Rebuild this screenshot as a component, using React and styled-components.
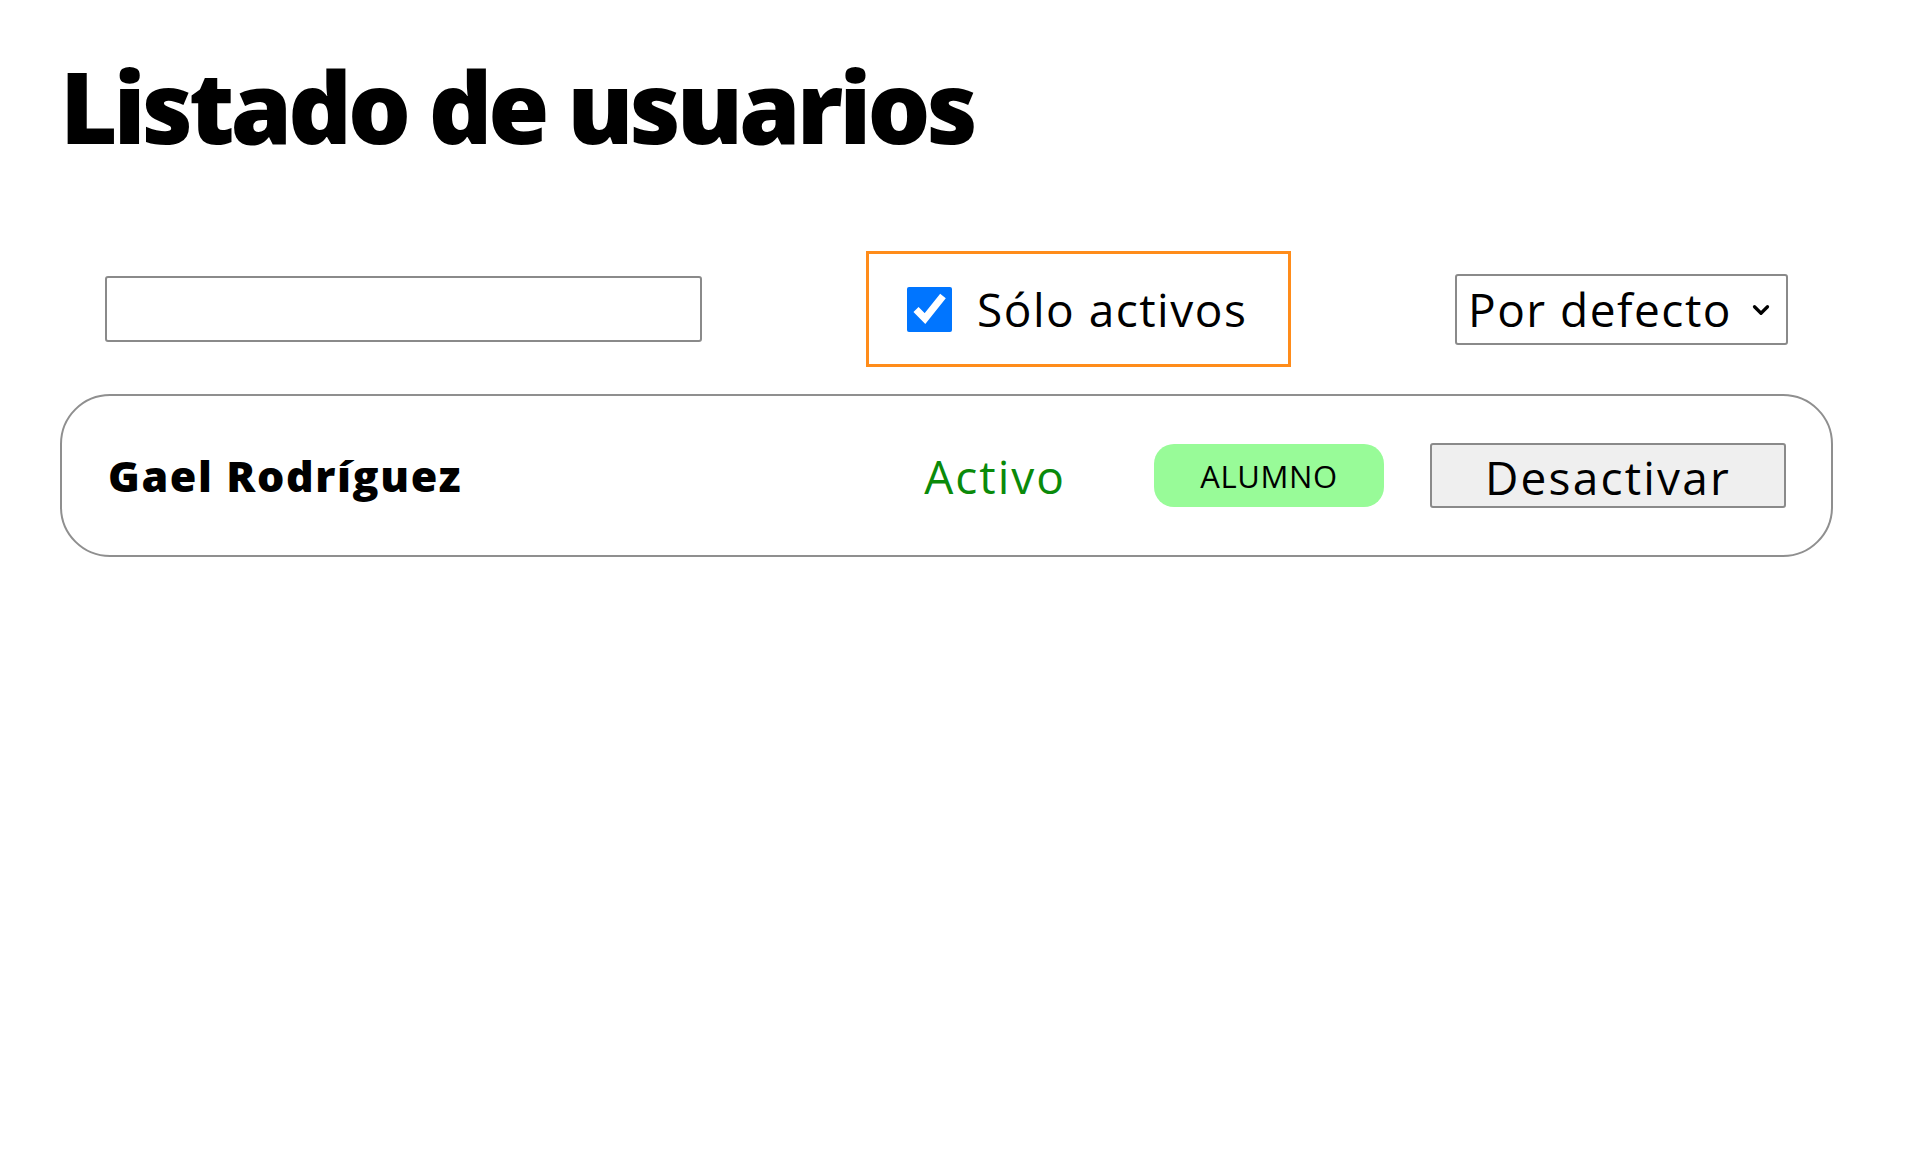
import React from 'react';
import styled, { createGlobalStyle } from 'styled-components';
import { ChevronDown } from 'lucide-react';

const GlobalStyle = createGlobalStyle`
  body {
    margin: 0;
    background: #ffffff;
    font-family: "Open Sans", "DejaVu Sans", sans-serif;
    color: #000000;
  }
`;

const UserListPage = () => {
  // Datos de ejemplo
  const users = [
    { id: 1, name: 'Gael Rodríguez', active: true, role: 'ALUMNO' },
  ];

  return (
    <>
      <GlobalStyle />
      <Wrapper>
        <PageTitle>Listado de usuarios</PageTitle>
        <Filters>
          <SearchInput type="text" />
          <CheckLabel>
            <Checkbox type="checkbox" defaultChecked />
            <span>Sólo activos</span>
          </CheckLabel>
          <SelectWrap>
            <SortSelect defaultValue="default">
              <option value="default">Por defecto</option>
              <option value="name">Nombre</option>
            </SortSelect>
            <SelectArrow size={26} strokeWidth={3} />
          </SelectWrap>
        </Filters>
        <UserList>
          {users.map(user => (
            <UserCard key={user.id}>
              <UserName>{user.name}</UserName>
              <Status $active={user.active}>{user.active ? 'Activo' : 'Inactivo'}</Status>
              <RoleBadge>{user.role}</RoleBadge>
              <ToggleButton>{user.active ? 'Desactivar' : 'Activar'}</ToggleButton>
            </UserCard>
          ))}
        </UserList>
      </Wrapper>
    </>
  );
};

const Wrapper = styled.div`
  padding: 0 87px 0 60px;
`;

const PageTitle = styled.h1`
  margin: 0;
  padding-top: 56px;
  font-size: 99px;
  font-weight: 800;
  line-height: 1;
  letter-spacing: -4px;
`;

const Filters = styled.div`
  display: flex;
  align-items: center;
  justify-content: space-between;
  padding: 0 45px;
  margin-top: 96px;
`;

const SearchInput = styled.input`
  width: 597px;
  height: 66px;
  box-sizing: border-box;
  border: 2px solid #8a8a8a;
  border-radius: 3px;
  font-size: 32px;
  font-family: inherit;
`;

const CheckLabel = styled.label`
  display: flex;
  align-items: center;
  gap: 25px;
  width: 425px;
  height: 116px;
  box-sizing: border-box;
  padding-left: 38px;
  border: 3px solid #ff8c1a;
  font-size: 46px;
  letter-spacing: 1.5px;
`;

const Checkbox = styled.input`
  width: 45px;
  height: 45px;
  margin: 0;
  accent-color: #0075ff;
`;

const SelectWrap = styled.div`
  position: relative;
  width: 333px;
  height: 71px;
`;

const SortSelect = styled.select`
  appearance: none;
  width: 100%;
  height: 100%;
  box-sizing: border-box;
  padding: 0 0 0 11px;
  border: 2px solid #8a8a8a;
  border-radius: 3px;
  background: #ffffff;
  font-family: inherit;
  font-size: 46px;
  letter-spacing: 1.5px;
  color: #000000;
`;

const SelectArrow = styled(ChevronDown)`
  position: absolute;
  right: 14px;
  top: 23px;
  color: #000000;
  pointer-events: none;
`;

const UserList = styled.div`
  display: flex;
  flex-direction: column;
  gap: 20px;
  margin-top: 27px;
`;

const UserCard = styled.div`
  display: flex;
  align-items: center;
  height: 163px;
  box-sizing: border-box;
  padding: 0 45px 0 46px;
  border: 2px solid #8f8f8f;
  border-radius: 50px;
`;

const UserName = styled.span`
  flex: 1;
  font-size: 43px;
  font-weight: 800;
  letter-spacing: 1.6px;
`;

const Status = styled.span`
  font-size: 46px;
  letter-spacing: 2px;
  color: #0a8a0a;
  margin-right: 88px;
`;

const RoleBadge = styled.span`
  display: flex;
  align-items: center;
  justify-content: center;
  width: 230px;
  height: 63px;
  border-radius: 20px;
  background: #98fb98;
  font-size: 31px;
  letter-spacing: 0.6px;
  margin-right: 46px;
`;

const ToggleButton = styled.button`
  width: 356px;
  height: 65px;
  box-sizing: border-box;
  border: 2px solid #8a8a8a;
  border-radius: 3px;
  background: #efefef;
  font-family: inherit;
  font-size: 46px;
  letter-spacing: 2.2px;
  color: #000000;
  cursor: pointer;
`;

export default UserListPage;
